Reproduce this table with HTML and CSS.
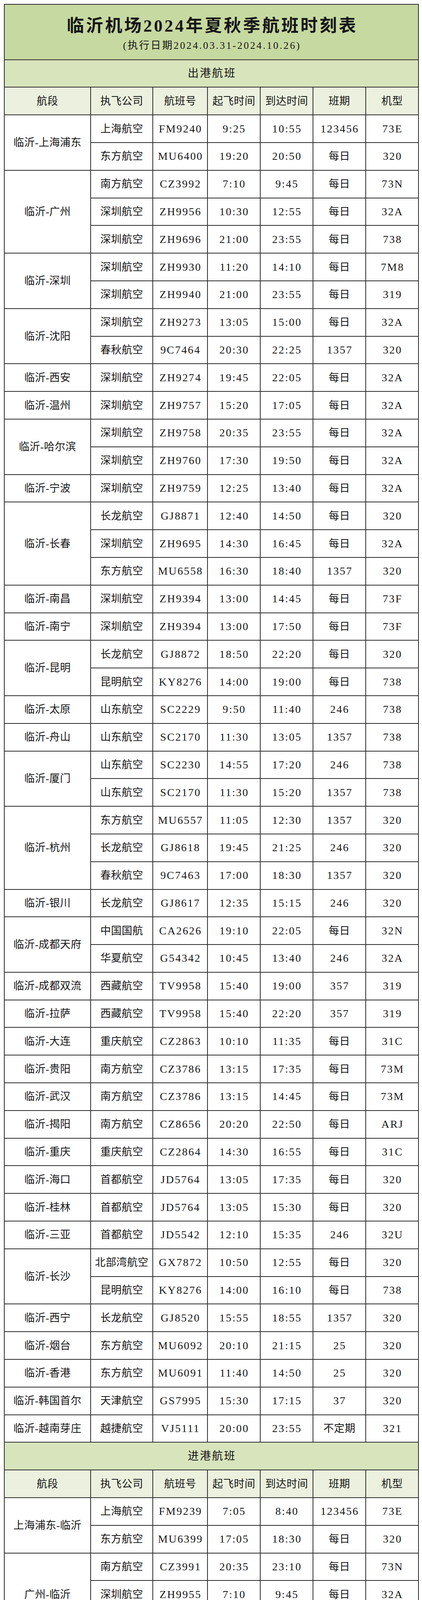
FILE: index.html
```html
<!DOCTYPE html>
<html lang="zh-CN">
<head>
<meta charset="utf-8">
<title>临沂机场2024年夏秋季航班时刻表</title>
<link rel="stylesheet" href="styles.css">
</head>
<body>
<div class="sheet">
<table class="tt">
<colgroup><col class="w-route"><col class="w-air"><col class="w-no"><col class="w-t"><col class="w-t"><col class="w-t"><col class="w-t"></colgroup>
<tr class="head"><td colspan="7"><div class="title">临沂机场2024年夏秋季航班时刻表</div><div class="sub">(执行日期2024.03.31-2024.10.26)</div></td></tr>
<tr class="sec"><td colspan="7">出港航班</td></tr>
<tr class="cols"><td>航段</td><td>执飞公司</td><td>航班号</td><td>起飞时间</td><td>到达时间</td><td>班期</td><td>机型</td></tr>
<tr><td class="c" rowspan="2">临沂-上海浦东</td><td class="c">上海航空</td><td>FM9240</td><td>9:25</td><td>10:55</td><td>123456</td><td>73E</td></tr>
<tr><td class="c">东方航空</td><td>MU6400</td><td>19:20</td><td>20:50</td><td class="c">每日</td><td>320</td></tr>
<tr><td class="c" rowspan="3">临沂-广州</td><td class="c">南方航空</td><td>CZ3992</td><td>7:10</td><td>9:45</td><td class="c">每日</td><td>73N</td></tr>
<tr><td class="c">深圳航空</td><td>ZH9956</td><td>10:30</td><td>12:55</td><td class="c">每日</td><td>32A</td></tr>
<tr><td class="c">深圳航空</td><td>ZH9696</td><td>21:00</td><td>23:55</td><td class="c">每日</td><td>738</td></tr>
<tr><td class="c" rowspan="2">临沂-深圳</td><td class="c">深圳航空</td><td>ZH9930</td><td>11:20</td><td>14:10</td><td class="c">每日</td><td>7M8</td></tr>
<tr><td class="c">深圳航空</td><td>ZH9940</td><td>21:00</td><td>23:55</td><td class="c">每日</td><td>319</td></tr>
<tr><td class="c" rowspan="2">临沂-沈阳</td><td class="c">深圳航空</td><td>ZH9273</td><td>13:05</td><td>15:00</td><td class="c">每日</td><td>32A</td></tr>
<tr><td class="c">春秋航空</td><td>9C7464</td><td>20:30</td><td>22:25</td><td>1357</td><td>320</td></tr>
<tr><td class="c">临沂-西安</td><td class="c">深圳航空</td><td>ZH9274</td><td>19:45</td><td>22:05</td><td class="c">每日</td><td>32A</td></tr>
<tr><td class="c">临沂-温州</td><td class="c">深圳航空</td><td>ZH9757</td><td>15:20</td><td>17:05</td><td class="c">每日</td><td>32A</td></tr>
<tr><td class="c" rowspan="2">临沂-哈尔滨</td><td class="c">深圳航空</td><td>ZH9758</td><td>20:35</td><td>23:55</td><td class="c">每日</td><td>32A</td></tr>
<tr><td class="c">深圳航空</td><td>ZH9760</td><td>17:30</td><td>19:50</td><td class="c">每日</td><td>32A</td></tr>
<tr><td class="c">临沂-宁波</td><td class="c">深圳航空</td><td>ZH9759</td><td>12:25</td><td>13:40</td><td class="c">每日</td><td>32A</td></tr>
<tr><td class="c" rowspan="3">临沂-长春</td><td class="c">长龙航空</td><td>GJ8871</td><td>12:40</td><td>14:50</td><td class="c">每日</td><td>320</td></tr>
<tr><td class="c">深圳航空</td><td>ZH9695</td><td>14:30</td><td>16:45</td><td class="c">每日</td><td>32A</td></tr>
<tr><td class="c">东方航空</td><td>MU6558</td><td>16:30</td><td>18:40</td><td>1357</td><td>320</td></tr>
<tr><td class="c">临沂-南昌</td><td class="c">深圳航空</td><td>ZH9394</td><td>13:00</td><td>14:45</td><td class="c">每日</td><td>73F</td></tr>
<tr><td class="c">临沂-南宁</td><td class="c">深圳航空</td><td>ZH9394</td><td>13:00</td><td>17:50</td><td class="c">每日</td><td>73F</td></tr>
<tr><td class="c" rowspan="2">临沂-昆明</td><td class="c">长龙航空</td><td>GJ8872</td><td>18:50</td><td>22:20</td><td class="c">每日</td><td>320</td></tr>
<tr><td class="c">昆明航空</td><td>KY8276</td><td>14:00</td><td>19:00</td><td class="c">每日</td><td>738</td></tr>
<tr><td class="c">临沂-太原</td><td class="c">山东航空</td><td>SC2229</td><td>9:50</td><td>11:40</td><td>246</td><td>738</td></tr>
<tr><td class="c">临沂-舟山</td><td class="c">山东航空</td><td>SC2170</td><td>11:30</td><td>13:05</td><td>1357</td><td>738</td></tr>
<tr><td class="c" rowspan="2">临沂-厦门</td><td class="c">山东航空</td><td>SC2230</td><td>14:55</td><td>17:20</td><td>246</td><td>738</td></tr>
<tr><td class="c">山东航空</td><td>SC2170</td><td>11:30</td><td>15:20</td><td>1357</td><td>738</td></tr>
<tr><td class="c" rowspan="3">临沂-杭州</td><td class="c">东方航空</td><td>MU6557</td><td>11:05</td><td>12:30</td><td>1357</td><td>320</td></tr>
<tr><td class="c">长龙航空</td><td>GJ8618</td><td>19:45</td><td>21:25</td><td>246</td><td>320</td></tr>
<tr><td class="c">春秋航空</td><td>9C7463</td><td>17:00</td><td>18:30</td><td>1357</td><td>320</td></tr>
<tr><td class="c">临沂-银川</td><td class="c">长龙航空</td><td>GJ8617</td><td>12:35</td><td>15:15</td><td>246</td><td>320</td></tr>
<tr><td class="c" rowspan="2">临沂-成都天府</td><td class="c">中国国航</td><td>CA2626</td><td>19:10</td><td>22:05</td><td class="c">每日</td><td>32N</td></tr>
<tr><td class="c">华夏航空</td><td>G54342</td><td>10:45</td><td>13:40</td><td>246</td><td>32A</td></tr>
<tr><td class="c">临沂-成都双流</td><td class="c">西藏航空</td><td>TV9958</td><td>15:40</td><td>19:00</td><td>357</td><td>319</td></tr>
<tr><td class="c">临沂-拉萨</td><td class="c">西藏航空</td><td>TV9958</td><td>15:40</td><td>22:20</td><td>357</td><td>319</td></tr>
<tr><td class="c">临沂-大连</td><td class="c">重庆航空</td><td>CZ2863</td><td>10:10</td><td>11:35</td><td class="c">每日</td><td>31C</td></tr>
<tr><td class="c">临沂-贵阳</td><td class="c">南方航空</td><td>CZ3786</td><td>13:15</td><td>17:35</td><td class="c">每日</td><td>73M</td></tr>
<tr><td class="c">临沂-武汉</td><td class="c">南方航空</td><td>CZ3786</td><td>13:15</td><td>14:45</td><td class="c">每日</td><td>73M</td></tr>
<tr><td class="c">临沂-揭阳</td><td class="c">南方航空</td><td>CZ8656</td><td>20:20</td><td>22:50</td><td class="c">每日</td><td>ARJ</td></tr>
<tr><td class="c">临沂-重庆</td><td class="c">重庆航空</td><td>CZ2864</td><td>14:30</td><td>16:55</td><td class="c">每日</td><td>31C</td></tr>
<tr><td class="c">临沂-海口</td><td class="c">首都航空</td><td>JD5764</td><td>13:05</td><td>17:35</td><td class="c">每日</td><td>320</td></tr>
<tr><td class="c">临沂-桂林</td><td class="c">首都航空</td><td>JD5764</td><td>13:05</td><td>15:30</td><td class="c">每日</td><td>320</td></tr>
<tr><td class="c">临沂-三亚</td><td class="c">首都航空</td><td>JD5542</td><td>12:10</td><td>15:35</td><td>246</td><td>32U</td></tr>
<tr><td class="c" rowspan="2">临沂-长沙</td><td class="c">北部湾航空</td><td>GX7872</td><td>10:50</td><td>12:55</td><td class="c">每日</td><td>320</td></tr>
<tr><td class="c">昆明航空</td><td>KY8276</td><td>14:00</td><td>16:10</td><td class="c">每日</td><td>738</td></tr>
<tr><td class="c">临沂-西宁</td><td class="c">长龙航空</td><td>GJ8520</td><td>15:55</td><td>18:55</td><td>1357</td><td>320</td></tr>
<tr><td class="c">临沂-烟台</td><td class="c">东方航空</td><td>MU6092</td><td>20:10</td><td>21:15</td><td>25</td><td>320</td></tr>
<tr><td class="c">临沂-香港</td><td class="c">东方航空</td><td>MU6091</td><td>11:40</td><td>14:50</td><td>25</td><td>320</td></tr>
<tr><td class="c">临沂-韩国首尔</td><td class="c">天津航空</td><td>GS7995</td><td>15:30</td><td>17:15</td><td>37</td><td>320</td></tr>
<tr><td class="c">临沂-越南芽庄</td><td class="c">越捷航空</td><td>VJ5111</td><td>20:00</td><td>23:55</td><td class="c">不定期</td><td>321</td></tr>
<tr class="sec"><td colspan="7">进港航班</td></tr>
<tr class="cols"><td>航段</td><td>执飞公司</td><td>航班号</td><td>起飞时间</td><td>到达时间</td><td>班期</td><td>机型</td></tr>
<tr><td class="c" rowspan="2">上海浦东-临沂</td><td class="c">上海航空</td><td>FM9239</td><td>7:05</td><td>8:40</td><td>123456</td><td>73E</td></tr>
<tr><td class="c">东方航空</td><td>MU6399</td><td>17:05</td><td>18:30</td><td class="c">每日</td><td>320</td></tr>
<tr><td class="c" rowspan="3">广州-临沂</td><td class="c">南方航空</td><td>CZ3991</td><td>20:35</td><td>23:10</td><td class="c">每日</td><td>73N</td></tr>
<tr><td class="c">深圳航空</td><td>ZH9955</td><td>7:10</td><td>9:45</td><td class="c">每日</td><td>32A</td></tr>
<tr><td class="c">深圳航空</td><td>ZH9695</td><td>10:40</td><td>13:20</td><td class="c">每日</td><td>32A</td></tr>
<tr><td class="c" rowspan="2">深圳-临沂</td><td class="c">深圳航空</td><td>ZH9929</td><td>7:55</td><td>10:35</td><td class="c">每日</td><td>7M8</td></tr>
<tr><td class="c">深圳航空</td><td>ZH9939</td><td>17:15</td><td>19:50</td><td class="c">每日</td><td>319</td></tr>
<tr><td class="c" rowspan="2">沈阳-临沂</td><td class="c">深圳航空</td><td>ZH9274</td><td>15:50</td><td>17:55</td><td class="c">每日</td><td>320</td></tr>
<tr><td class="c">春秋航空</td><td>9C7463</td><td>12:40</td><td>14:50</td><td>1357</td><td>320</td></tr>
<tr><td class="c">西安-临沂</td><td class="c">深圳航空</td><td>ZH9273</td><td>10:10</td><td>12:20</td><td class="c">每日</td><td>32A</td></tr>
<tr><td class="c">温州-临沂</td><td class="c">深圳航空</td><td>ZH9758</td><td>18:00</td><td>19:50</td><td class="c">每日</td><td>32A</td></tr>
<tr><td class="c" rowspan="2">哈尔滨-临沂</td><td class="c">深圳航空</td><td>ZH9759</td><td>9:10</td><td>11:40</td><td class="c">每日</td><td>32A</td></tr>
<tr><td class="c">深圳航空</td><td>ZH9757</td><td>12:15</td><td>14:35</td><td class="c">每日</td><td>32A</td></tr>
<tr><td class="c">宁波-临沂</td><td class="c">深圳航空</td><td>ZH9760</td><td>14:50</td><td>16:35</td><td class="c">每日</td><td>32A</td></tr>
<tr><td class="c" rowspan="3">长春-临沂</td><td class="c">东方航空</td><td>MU6557</td><td>8:05</td><td>10:20</td><td>1357</td><td>320</td></tr>
<tr><td class="c">长龙航空</td><td>GJ8872</td><td>15:40</td><td>18:05</td><td class="c">每日</td><td>320</td></tr>
<tr><td class="c">深圳航空</td><td>ZH9696</td><td>17:40</td><td>19:50</td><td class="c">每日</td><td>32A</td></tr>
<tr><td class="c">南昌-临沂</td><td class="c">深圳航空</td><td>ZH9393</td><td>10:35</td><td>12:15</td><td class="c">每日</td><td>73F</td></tr>
<tr><td class="c">南宁-临沂</td><td class="c">深圳航空</td><td>ZH9393</td><td>7:55</td><td>12:15</td><td class="c">每日</td><td>73F</td></tr>
<tr><td class="c" rowspan="2">昆明-临沂</td><td class="c">长龙航空</td><td>GJ8871</td><td>8:50</td><td>11:55</td><td class="c">每日</td><td>320</td></tr>
<tr><td class="c">昆明航空</td><td>KY8275</td><td>8:05</td><td>13:00</td><td class="c">每日</td><td>738</td></tr>
<tr><td class="c">太原-临沂</td><td class="c">山东航空</td><td>SC2230</td><td>12:30</td><td>14:10</td><td>246</td><td>738</td></tr>
<tr><td class="c">舟山-临沂</td><td class="c">山东航空</td><td>SC2169</td><td>9:10</td><td>10:45</td><td>1357</td><td>738</td></tr>
<tr><td class="c" rowspan="2">厦门-临沂</td><td class="c">山东航空</td><td>SC2169</td><td>6:50</td><td>10:45</td><td>1357</td><td>738</td></tr>
<tr><td class="c">山东航空</td><td>SC2229</td><td>6:40</td><td>9:05</td><td>246</td><td>738</td></tr>
<tr><td class="c" rowspan="3">杭州-临沂</td><td class="c">长龙航空</td><td>GJ8617</td><td>10:15</td><td>11:50</td><td>246</td><td>320</td></tr>
<tr><td class="c">东方航空</td><td>MU6558</td><td>13:35</td><td>15:20</td><td>1357</td><td>320</td></tr>
<tr><td class="c">春秋航空</td><td>9C7464</td><td>18:10</td><td>19:45</td><td>1357</td><td>320</td></tr>
<tr><td class="c">银川-临沂</td><td class="c">长龙航空</td><td>GJ8618</td><td>16:30</td><td>19:00</td><td>246</td><td>320</td></tr>
<tr><td class="c" rowspan="2">成都天府-临沂</td><td class="c">中国国航</td><td>CA2625</td><td>15:40</td><td>18:20</td><td class="c">每日</td><td>32N</td></tr>
<tr><td class="c">华夏航空</td><td>G54341</td><td>7:20</td><td>10:00</td><td>246</td><td>32A</td></tr>
<tr><td class="c">成都双流-临沂</td><td class="c">西藏航空</td><td>TV9957</td><td>11:10</td><td>14:05</td><td>357</td><td>319</td></tr>
<tr><td class="c">拉萨-临沂</td><td class="c">西藏航空</td><td>TV9957</td><td>8:10</td><td>14:05</td><td>357</td><td>319</td></tr>
<tr><td class="c">大连-临沂</td><td class="c">重庆航空</td><td>CZ2864</td><td>12:35</td><td>13:45</td><td class="c">每日</td><td>31C</td></tr>
<tr><td class="c">贵阳-临沂</td><td class="c">南方航空</td><td>CZ3785</td><td>8:00</td><td>12:30</td><td class="c">每日</td><td>73M</td></tr>
<tr><td class="c">武汉-临沂</td><td class="c">南方航空</td><td>CZ3785</td><td>10:50</td><td>12:30</td><td class="c">每日</td><td>73M</td></tr>
<tr><td class="c">揭阳-临沂</td><td class="c">南方航空</td><td>CZ8655</td><td>17:10</td><td>19:30</td><td class="c">每日</td><td>ARJ</td></tr>
<tr><td class="c">重庆-临沂</td><td class="c">重庆航空</td><td>CZ2863</td><td>7:05</td><td>9:25</td><td class="c">每日</td><td>31C</td></tr>
<tr><td class="c" rowspan="2">海口-临沂</td><td class="c" rowspan="2">首都航空</td><td rowspan="2">JD5763</td><td>6:50</td><td>11:35</td><td>246</td><td rowspan="2">320</td></tr>
<tr><td>8:05</td><td>12:20</td><td>1357</td></tr>
<tr><td class="c" rowspan="2">桂林-临沂</td><td class="c" rowspan="2">首都航空</td><td rowspan="2">JD5763</td><td>9:10</td><td>11:35</td><td>246</td><td rowspan="2">320</td></tr>
<tr><td>10:05</td><td>12:20</td><td>1357</td></tr>
<tr><td class="c">三亚-临沂</td><td class="c">首都航空</td><td>JD5541</td><td>6:55</td><td>10:20</td><td>246</td><td>32U</td></tr>
<tr><td class="c" rowspan="2">长沙-临沂</td><td class="c">北部湾航空</td><td>GX7871</td><td>8:15</td><td>10:05</td><td class="c">每日</td><td>320</td></tr>
<tr><td class="c">昆明航空</td><td>KY8275</td><td>11:05</td><td>13:00</td><td class="c">每日</td><td>738</td></tr>
<tr><td class="c" rowspan="2">西宁-临沂</td><td class="c" rowspan="2">长龙航空</td><td rowspan="2">GJ8519</td><td>10:55</td><td>13:35</td><td>7</td><td rowspan="2">320</td></tr>
<tr><td>12:40</td><td>15:20</td><td>135</td></tr>
<tr><td class="c">烟台-临沂</td><td class="c">东方航空</td><td>MU6091</td><td>9:10</td><td>10:20</td><td>25</td><td>320</td></tr>
<tr><td class="c">香港-临沂</td><td class="c">东方航空</td><td>MU6092</td><td>15:50</td><td>18:50</td><td>25</td><td>320</td></tr>
<tr><td class="c">韩国首尔-临沂</td><td class="c">天津航空</td><td>GS7996</td><td>11:00</td><td>12:40</td><td>37</td><td>320</td></tr>
<tr><td class="c">越南芽庄-临沂</td><td class="c">越捷航空</td><td>VJ5110</td><td>13:45</td><td>19:00</td><td class="c">不定期</td><td>321</td></tr>
<tr class="ft note"><td colspan="7">注:以上均为各航司发布的计划时刻和班期，具体航班信息，请以航司系统实际执行为准(以上为北京时间)。</td></tr>
<tr class="ft"><td colspan="7">售票中心：<span class="n">9600777 /0539-8327888</span></td></tr>
<tr class="ft"><td colspan="7">候机楼售票处：<span class="n">0539-8082566</span></td></tr>
<tr class="ft"><td colspan="7">问询处：<span class="n">0539-8082556</span></td></tr>
<tr class="ft"><td colspan="7">货运公司：<span class="n">0539-8082538/8082107</span></td></tr>
<tr class="ft"><td colspan="7">临沂市政务服务中心（南坊）：<span class="n">0539-8307767</span></td></tr>
</table>
</div>
</body>
</html>
```

FILE: styles.css
```css
html, body {
  margin: 0;
  padding: 0;
  background: #ffffff;
}

.sheet {
  padding: 10px 9px 0 10px;
}

.tt {
  width: 1060px;
  border-collapse: collapse;
  table-layout: fixed;
  color: #161616;
  font-family: "Liberation Serif", "Noto Sans CJK SC", serif;
}

.w-route { width: 221px; }
.w-air { width: 159px; }
.w-no { width: 140px; }
.w-t { width: 135px; }

.tt td {
  box-sizing: border-box;
  border: 2px solid #2c2c2c;
  height: 70.8px;
  padding: 0 0 0 2px;
  text-align: center;
  vertical-align: middle;
  font-size: 28px;
  letter-spacing: 2.4px;
  line-height: 32px;
  white-space: nowrap;
}

.tt td.c {
  font-size: 27px;
  letter-spacing: 0.4px;
  padding-left: 0;
}

/* title block */
.tt .head td {
  height: 141.6px;
  background: #c6d9a0;
  padding: 12px 0 0 0;
  letter-spacing: 0;
}

.title {
  font-size: 44px;
  font-weight: 700;
  letter-spacing: 5px;
  line-height: 48px;
  padding-left: 5px;
}

.sub {
  margin-top: 11px;
  font-size: 26px;
  letter-spacing: 3.4px;
  line-height: 30px;
  padding-left: 3px;
}

/* section header */
.tt .sec td {
  background: #d8e4bc;
  font-size: 28px;
  letter-spacing: 3px;
  padding-left: 3px;
}

/* column header */
.tt .cols td {
  background: #ebf1de;
  font-size: 27px;
  letter-spacing: 0.4px;
  padding-left: 0;
}

/* footer rows */
.tt .ft td {
  background: #edf0e3;
  text-align: left;
  padding-left: 7px;
  font-size: 28px;
  letter-spacing: 0;
}

.tt .ft .n {
  letter-spacing: 1.6px;
  font-size: 29px;
}

.tt .note td {
  font-size: 21px;
  font-weight: 700;
  letter-spacing: 0.2px;
}
```
